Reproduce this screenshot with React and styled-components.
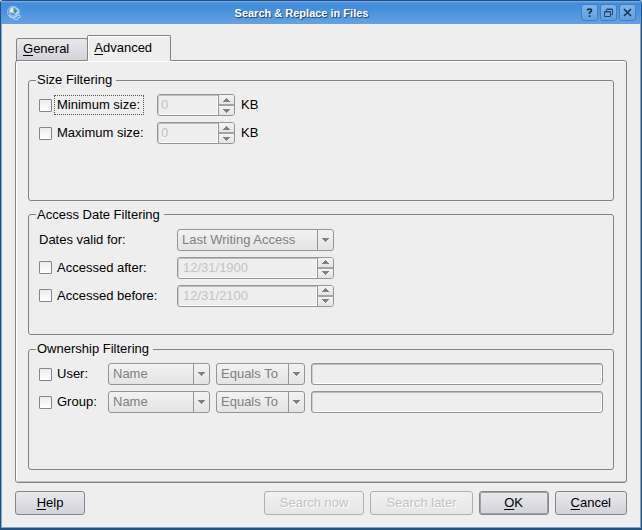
import React from "react";
import styled, { createGlobalStyle, css } from "styled-components";

const Global = createGlobalStyle`
  * { box-sizing: border-box; }
  body { margin: 0; background: #eeeeee; }
  body, button, input, select {
    font-family: "Liberation Sans", Arial, sans-serif;
    font-size: 13px;
    line-height: 16px;
    color: #000;
  }
`;

const Window = styled.div`
  min-height: 100vh;
  display: flex;
  flex-direction: column;
  border: 1px solid #23507f;
  border-bottom-width: 2px;
  border-radius: 3px 3px 0 0;
  background: #eeeeee;
  box-shadow: inset 1px 0 #7ba6d3, inset -1px 0 #7ba6d3, inset 0 -1px #7ba6d3;
`;

const TitleBar = styled.header`
  height: 23px;
  flex: none;
  display: flex;
  align-items: center;
  padding: 0 5px;
  background: linear-gradient(#7db2e8 0, #438edb 2px, #4590dc 8px, #65a1e2 100%);
`;

const Title = styled.h1`
  flex: 1;
  margin: 0;
  text-align: center;
  font-size: 11px;
  line-height: 16px;
  font-weight: bold;
  color: #fff;
  text-shadow: 1px 1px 1px #153f70;
`;

const TitleButtons = styled.div`
  display: flex;
  justify-content: flex-end;
  gap: 2px;
`;

const TitleButton = styled.button`
  width: 17px;
  height: 17px;
  padding: 0;
  display: grid;
  place-items: center;
  border: 1px solid #3c7fc5;
  border-radius: 3px;
  background: linear-gradient(#7fb3ea, #649fdd);
`;

const Body = styled.main`
  flex: 1;
  display: flex;
  flex-direction: column;
  padding: 11px 14px 13px;
`;

const TabList = styled.div`
  display: flex;
  align-items: flex-end;
  height: 26px;
  margin: 0 1px -1px;
`;

const Tab = styled.button`
  height: 23px;
  padding: 0 18px 1px 6px;
  border: 1px solid #838383;
  border-radius: 2px 2px 0 0;
  background: linear-gradient(#e9e9ec, #d2d2d9);
  ${(p) =>
    p.$active &&
    css`
      position: relative;
      height: 26px;
      margin-left: -1px;
      border-bottom-color: #eeeeee;
      background: #eeeeee;
      box-shadow: inset 1px 1px #fff;
    `}
`;

const Pane = styled.section`
  flex: 1;
  display: grid;
  grid-auto-rows: 1fr;
  gap: 6px;
  padding: 11px 12px 12px;
  border: 1px solid #838383;
  border-radius: 3px;
  box-shadow: inset 0 1px #fff, inset 1px 0 #fff, inset 0 -1px #c4c4c4;
`;

const Group = styled.fieldset`
  min-width: 0;
  margin: 0;
  padding: 6px 10px;
  border: 1px solid #838383;
  border-radius: 3px;
`;

const Legend = styled.legend`
  margin-left: -3px;
  padding: 0 4px 0 1px;
`;

const Rows = styled.div`
  display: grid;
  grid-template-columns: ${(p) => p.$columns};
  align-items: center;
  row-gap: 6px;
`;

const Controls = styled.div`
  display: flex;
  align-items: center;
  gap: 6px;
`;

const CheckLabel = styled.label`
  display: flex;
  align-items: center;
  gap: 2px;
`;

const CheckBox = styled.input`
  appearance: none;
  width: 13px;
  height: 13px;
  margin: 0;
  border: 1px solid #85858b;
  border-radius: 1px;
  background: linear-gradient(#ececef, #fff);
  &:checked { background: #438edb; }
`;

const CheckText = styled.span`
  padding: 1px 3px 1px 2px;
  border: 1px dotted ${(p) => (p.$focused ? "#555" : "transparent")};
`;

const frame = css`
  height: 22px;
  border: 1px solid #959595;
  border-radius: 3px;
`;

const sunken = css`
  background: #eeeeee;
  box-shadow: inset 0 1px #bdbdbd, inset 1px 0 #cfcfcf, inset -1px -1px #fff;
`;

const SpinFrame = styled.div`
  ${frame}
  display: flex;
  width: ${(p) => p.$width}px;
  overflow: hidden;
`;

const SpinInput = styled.input`
  flex: 1;
  min-width: 0;
  padding: 0 ${(p) => p.$inset}px;
  border: 0;
  border-radius: 2px 0 0 2px;
  color: #c3c3c3;
  ${sunken}
`;

const SpinButtons = styled.div`
  width: 16px;
  display: grid;
  grid-template-rows: 10px 10px;
  border-left: 1px solid #959595;
`;

const SpinButton = styled.button`
  min-height: 0;
  padding: 0;
  display: grid;
  place-items: center;
  border: 0;
  border-bottom: 1px solid #a4a4a4;
  background: linear-gradient(#f3f3f3, #e4e4e4);
  & + & {
    border-bottom: 0;
    border-top: 1px solid #a4a4a4;
  }
`;

const ComboFrame = styled.div`
  ${frame}
  position: relative;
  width: ${(p) => p.$width}px;
  background: linear-gradient(#f2f2f2, #e4e4e4);
`;

const Select = styled.select`
  appearance: none;
  width: 100%;
  height: 20px;
  padding: 0 18px 0 4px;
  border: 0;
  background: transparent;
  &:disabled { color: #808080; opacity: 1; }
`;

const ComboArrow = styled.span`
  position: absolute;
  inset: 0 0 0 auto;
  width: 16px;
  display: grid;
  place-items: center;
  border-left: 1px solid #959595;
  pointer-events: none;
`;

const TextField = styled.input`
  ${frame}
  flex: 1;
  min-width: 0;
  padding: 0 4px;
  ${sunken}
`;

const Footer = styled.footer`
  display: flex;
  gap: 6px;
  margin-top: 8px;
`;

const Spacer = styled.div`
  flex: 1;
`;

const Button = styled.button`
  height: 24px;
  min-width: 70px;
  padding: 0 15px;
  border: 1px solid #85858b;
  border-radius: 3px;
  background: linear-gradient(#e9e9ed, #d2d2da);
  ${(p) =>
    p.$default &&
    css`
      box-shadow: inset 0 0 0 1px #a0a0a6;
    `}
  &:disabled {
    border-color: #b0b0b0;
    background: linear-gradient(#f1f1f1, #e6e6e6);
    color: #c3c3c3;
    text-shadow: 1px 1px #fff;
  }
`;

const Mnemonic = styled.span`
  text-decoration: underline;
  text-underline-offset: 2px;
`;

const Arrow = ({ up }) => (
  <svg width="7" height="4" viewBox="0 0 7 4" shapeRendering="crispEdges" aria-hidden="true">
    <path d={up ? "M3 0h1v1h1v1h1v1h1v1H0V3h1V2h1V1h1z" : "M0 0h7v1H6v1H5v1H4v1H3V3H2V2H1V1H0z"} fill="#808080" />
  </svg>
);

const GlobeIcon = () => (
  <svg width="16" height="16" viewBox="0 0 16 16" aria-hidden="true">
    <circle cx="7" cy="7" r="5.5" fill="#8fbdec" stroke="#a9cdf2" />
    <circle cx="7.500" cy="6.500" r="3.800" fill="#d6ebf5" />
    <path d="M7.500 3q3.500 0 3.500 3.500L9.500 8.500 7.500 7z" fill="#3f9a80" />
    <path d="M4 7q0 3 3.500 3.500L10 9 7 8z" fill="#5a8fd0" />
    <path d="M2 10q4 4.500 8 1.500l3-1.500 2 1.500-2 1.500-2-.5M7 13l3 2 2-1M11 3l2 2v4" fill="none" stroke="#b7d6f5" />
    <path d="M3 3.500Q1 7 3 10" fill="none" stroke="#5f93cc" />
  </svg>
);

function Spin({ label, value, width, inset = 3 }) {
  return (
    <SpinFrame $width={width}>
      <SpinInput aria-label={label} defaultValue={value} $inset={inset} disabled />
      <SpinButtons>
        <SpinButton type="button" aria-label={`Increase ${label}`} disabled><Arrow up /></SpinButton>
        <SpinButton type="button" aria-label={`Decrease ${label}`} disabled><Arrow /></SpinButton>
      </SpinButtons>
    </SpinFrame>
  );
}

function Combo({ label, id, value, width }) {
  return (
    <ComboFrame $width={width}>
      <Select aria-label={label} id={id} disabled>
        <option>{value}</option>
      </Select>
      <ComboArrow><Arrow /></ComboArrow>
    </ComboFrame>
  );
}

const Check = ({ children, focused }) => (
  <CheckLabel>
    <CheckBox type="checkbox" />
    <CheckText $focused={focused}>{children}</CheckText>
  </CheckLabel>
);

const OwnerRow = ({ name }) => (
  <>
    <Check>{name}:</Check>
    <Controls>
      <Combo label={`${name} field`} value="Name" width={102} />
      <Combo label={`${name} comparison`} value="Equals To" width={89} />
      <TextField type="text" aria-label={`${name} value`} disabled />
    </Controls>
  </>
);

export default function App() {
  return (
    <>
      <Global />
      <Window>
        <TitleBar>
          <GlobeIcon />
          <Title>Search &amp; Replace in Files</Title>
          <TitleButtons>
            <TitleButton type="button" aria-label="Help">
              <svg width="9" height="9" viewBox="0 0 9 9" fill="none" stroke="#12304f" strokeWidth="1.6">
                <path d="M2.500 2.500Q2.500 1 4.500 1t2 1.500Q6.500 3.500 4.500 4.500V6M4.500 7.200V9" />
              </svg>
            </TitleButton>
            <TitleButton type="button" aria-label="Restore">
              <svg width="9" height="9" viewBox="0 0 9 9" fill="none" stroke="#24496f">
                <path d="M2.500 3V1.500h6v5H6.500M2.500 1h6M.5 3.500h6v5h-6zM.5 4h6" />
              </svg>
            </TitleButton>
            <TitleButton type="button" aria-label="Close">
              <svg width="9" height="9" viewBox="0 0 9 9" fill="none" stroke="#12304f" strokeWidth="1.5">
                <path d="m1 1 7 7M8 1 1 8" />
              </svg>
            </TitleButton>
          </TitleButtons>
        </TitleBar>
        <Body>
          <TabList role="tablist">
            <Tab type="button" role="tab" aria-selected="false"><Mnemonic>G</Mnemonic>eneral</Tab>
            <Tab type="button" role="tab" aria-selected="true" $active><Mnemonic>A</Mnemonic>dvanced</Tab>
          </TabList>
          <Pane role="tabpanel" aria-label="Advanced">
            <Group>
              <Legend>Size Filtering</Legend>
              <Rows $columns="118px 1fr">
                <Check focused>Minimum size:</Check>
                <Controls><Spin label="Minimum size" value="0" width={78} /><span>KB</span></Controls>
                <Check>Maximum size:</Check>
                <Controls><Spin label="Maximum size" value="0" width={78} /><span>KB</span></Controls>
              </Rows>
            </Group>
            <Group>
              <Legend>Access Date Filtering</Legend>
              <Rows $columns="138px 1fr">
                <label htmlFor="dates">Dates valid for:</label>
                <Combo id="dates" value="Last Writing Access" width={157} />
                <Check>Accessed after:</Check>
                <Spin label="Accessed after" value="12/31/1900" width={157} inset={5} />
                <Check>Accessed before:</Check>
                <Spin label="Accessed before" value="12/31/2100" width={157} inset={5} />
              </Rows>
            </Group>
            <Group>
              <Legend>Ownership Filtering</Legend>
              <Rows $columns="69px 1fr">
                <OwnerRow name="User" />
                <OwnerRow name="Group" />
              </Rows>
            </Group>
          </Pane>
          <Footer>
            <Button type="button"><Mnemonic>H</Mnemonic>elp</Button>
            <Spacer />
            <Button type="button" disabled>Search now</Button>
            <Button type="button" disabled>Search later</Button>
            <Button type="button" $default><Mnemonic>O</Mnemonic>K</Button>
            <Button type="button"><Mnemonic>C</Mnemonic>ancel</Button>
          </Footer>
        </Body>
      </Window>
    </>
  );
}
